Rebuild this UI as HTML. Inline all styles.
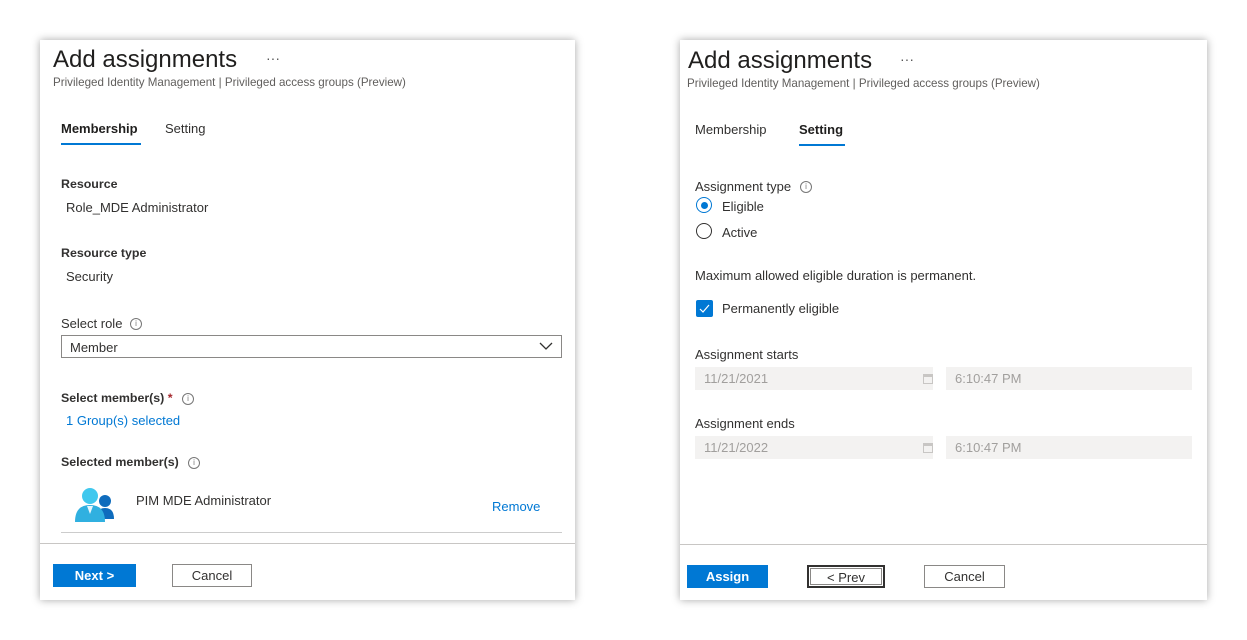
<!DOCTYPE html>
<html><head><style>
body{margin:0;width:1247px;height:640px;background:#fff;position:relative;font-family:"Liberation Sans",sans-serif;color:#323130;overflow:hidden}
.p{position:absolute;background:#fff;box-shadow:0 0 8px rgba(0,0,0,.35)}
.a{position:absolute;white-space:nowrap}
.t{font-size:24px;color:#201f1e}
.s{font-size:11.6px;color:#605e5c}
.f{font-size:13px}
.lbl{font-size:13px;color:#323130}
.b{font-weight:bold}
.lbl.b{font-size:12.4px}
.i{position:absolute;width:10px;height:10px;border:1px solid #777;border-radius:50%;font-size:8px;text-align:center;line-height:10px;color:#777}
.btn{position:absolute;height:23px;box-sizing:border-box;font-size:13px;text-align:center;line-height:21px}
.pri{background:#0078d4;color:#fff;font-weight:bold;border:1px solid #0078d4}
.sec{border:1px solid #8a8886;color:#323130}
.inp{position:absolute;height:23px;background:#f3f2f1;color:#a19f9d;font-size:13px;line-height:23px;padding-left:9px;box-sizing:border-box}
</style></head><body>
<div class="p" style="left:40px;top:40px;width:535px;height:560px">
<div class="a t" style="left:13px;top:6px">Add assignments</div>
<div class="a" style="left:226px;top:10px;font-size:14px;color:#555">···</div>
<div class="a s" style="left:13px;top:36px">Privileged Identity Management | Privileged access groups (Preview)</div>
<div class="a f b" style="left:21px;top:81px;color:#201f1e">Membership</div>
<div class="a" style="left:21px;top:103px;width:80px;height:2px;background:#0078d4"></div>
<div class="a f" style="left:125px;top:81px">Setting</div>
<div class="a lbl b" style="left:21px;top:137px">Resource</div>
<div class="a f" style="left:26px;top:160px">Role_MDE Administrator</div>
<div class="a lbl b" style="left:21px;top:206px">Resource type</div>
<div class="a f" style="left:26px;top:229px">Security</div>
<div class="a lbl" style="left:21px;top:276px">Select role</div>
<div class="i" style="left:90px;top:278px">i</div>
<div class="a" style="left:21px;top:295px;width:501px;height:23px;border:1px solid #8a8886;box-sizing:border-box"></div>
<div class="a f" style="left:30px;top:300px">Member</div>
<svg class="a" style="left:498px;top:300px" width="16" height="12"><path d="M2 3 L8 9 L14 3" fill="none" stroke="#323130" stroke-width="1.3"/></svg>
<div class="a lbl b" style="left:21px;top:351px">Select member(s) <span style="color:#a4262c">*</span></div>
<div class="i" style="left:142px;top:353px">i</div>
<div class="a f" style="left:26px;top:373px;color:#0078d4">1 Group(s) selected</div>
<div class="a lbl b" style="left:21px;top:415px">Selected member(s)</div>
<div class="i" style="left:148px;top:417px">i</div>
<svg class="a" style="left:34px;top:446px" width="44" height="36"><circle cx="31" cy="15" r="6" fill="#0f6cbd"/><path d="M22 33 Q22 22 31 22 Q40 22 40 33Z" fill="#0f6cbd"/><circle cx="16" cy="10" r="8" fill="#40c8ee"/><path d="M1 36 Q1 19 16 19 Q31 19 31 36Z" fill="#30b0e0"/><path d="M13 20 L16 28 L19 20Z" fill="#e8f6fc"/></svg>
<div class="a f" style="left:96px;top:453px">PIM MDE Administrator</div>
<div class="a f" style="left:452px;top:459px;color:#0078d4">Remove</div>
<div class="a" style="left:21px;top:492px;width:501px;height:1px;background:#ccc"></div>
<div class="a" style="left:0;top:503px;width:535px;height:1px;background:#c8c6c4"></div>
<div class="btn pri" style="left:13px;top:524px;width:83px">Next &gt;</div>
<div class="btn sec" style="left:132px;top:524px;width:80px">Cancel</div>
</div>

<div class="p" style="left:680px;top:40px;width:527px;height:560px">
<div class="a t" style="left:8px;top:7px">Add assignments</div>
<div class="a" style="left:220px;top:11px;font-size:14px;color:#555">···</div>
<div class="a s" style="left:7px;top:37px">Privileged Identity Management | Privileged access groups (Preview)</div>
<div class="a f" style="left:15px;top:82px">Membership</div>
<div class="a f b" style="left:119px;top:82px;color:#201f1e">Setting</div>
<div class="a" style="left:119px;top:104px;width:46px;height:2px;background:#0078d4"></div>
<div class="a lbl" style="left:15px;top:139px">Assignment type</div>
<div class="i" style="left:120px;top:141px">i</div>
<div class="a" style="left:16px;top:157px;width:14px;height:14px;border:1.5px solid #0078d4;border-radius:50%"></div>
<div class="a" style="left:21px;top:162px;width:7px;height:7px;background:#0078d4;border-radius:50%"></div>
<div class="a f" style="left:42px;top:159px">Eligible</div>
<div class="a" style="left:16px;top:183px;width:14px;height:14px;border:1.5px solid #323130;border-radius:50%"></div>
<div class="a f" style="left:42px;top:185px">Active</div>
<div class="a f" style="left:15px;top:228px">Maximum allowed eligible duration is permanent.</div>
<div class="a" style="left:16px;top:260px;width:17px;height:17px;background:#0078d4;border-radius:2px"></div>
<svg class="a" style="left:16px;top:260px" width="17" height="17"><path d="M4 9 L7 12 L13 5" fill="none" stroke="#fff" stroke-width="1.2"/></svg>
<div class="a f" style="left:42px;top:261px">Permanently eligible</div>
<div class="a lbl" style="left:15px;top:307px">Assignment starts</div>
<div class="inp" style="left:15px;top:327px;width:238px">11/21/2021</div>
<div class="a" style="left:243px;top:334px;width:10px;height:10px;border:1px solid #c8c6c4;border-top-width:3px;box-sizing:border-box"></div>
<div class="inp" style="left:266px;top:327px;width:246px">6:10:47 PM</div>
<div class="a lbl" style="left:15px;top:376px">Assignment ends</div>
<div class="inp" style="left:15px;top:396px;width:238px">11/21/2022</div>
<div class="a" style="left:243px;top:403px;width:10px;height:10px;border:1px solid #c8c6c4;border-top-width:3px;box-sizing:border-box"></div>
<div class="inp" style="left:266px;top:396px;width:246px">6:10:47 PM</div>
<div class="a" style="left:0;top:504px;width:527px;height:1px;background:#c8c6c4"></div>
<div class="btn pri" style="left:7px;top:525px;width:81px">Assign</div>
<div class="btn" style="left:127px;top:525px;width:78px;border:2px solid #323130;outline:1px solid #8a8886;outline-offset:-4px">&lt; Prev</div>
<div class="btn sec" style="left:244px;top:525px;width:81px">Cancel</div>
</div>
</body></html>
